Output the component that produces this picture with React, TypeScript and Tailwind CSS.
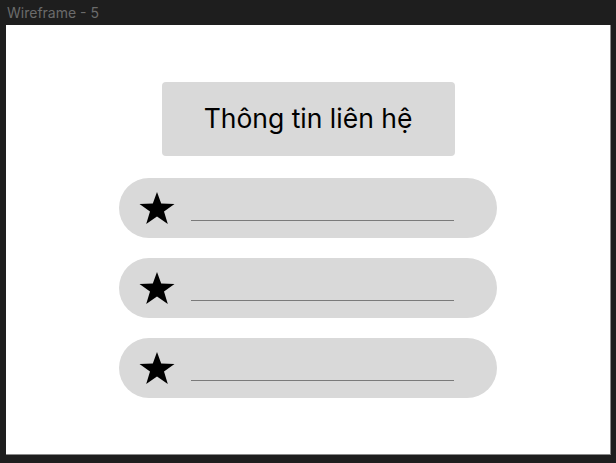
const rows = [0, 1, 2];

function Star() {
  return (
    <svg width="36" height="32" viewBox="0 0 36 32" className="shrink-0">
      <polygon
        points="18,0 22.2,11.6 35.5,11.9 25,19.6 28.8,32 18,24.6 7.2,32 11,19.6 0.5,11.9 13.8,11.6"
        fill="#000"
      />
    </svg>
  );
}

function ContactRow() {
  return (
    <div className="flex h-[60px] w-[378px] items-center rounded-full bg-[#d9d9d9] pl-[20px]">
      <Star />
      <div className="ml-[16px] mt-[24px] h-px w-[263px] bg-[#7a7a7a]" />
    </div>
  );
}

export default function App() {
  return (
    <div className="h-[463px] w-[616px] overflow-hidden bg-[#1e1e1e] font-['Inter','Noto_Sans',sans-serif]">
      {/* frame label */}
      <div className="flex h-[25px] items-center pl-[7px] text-[14px] leading-none text-[#6b6b6b]">
        Wireframe - 5
      </div>

      {/* frame */}
      <div className="ml-[6px] flex h-[430px] w-[605px] flex-col items-center border-r border-b border-[#8a8a8a] bg-white pt-[57px]">
        <div className="flex h-[74px] w-[293px] items-center justify-center rounded-[4px] bg-[#d9d9d9] text-[26.5px] text-black">
          Thông tin liên hệ
        </div>

        <div className="mt-[22px] flex flex-col gap-[20px]">
          {rows.map((r) => (
            <ContactRow key={r} />
          ))}
        </div>
      </div>
    </div>
  );
}
